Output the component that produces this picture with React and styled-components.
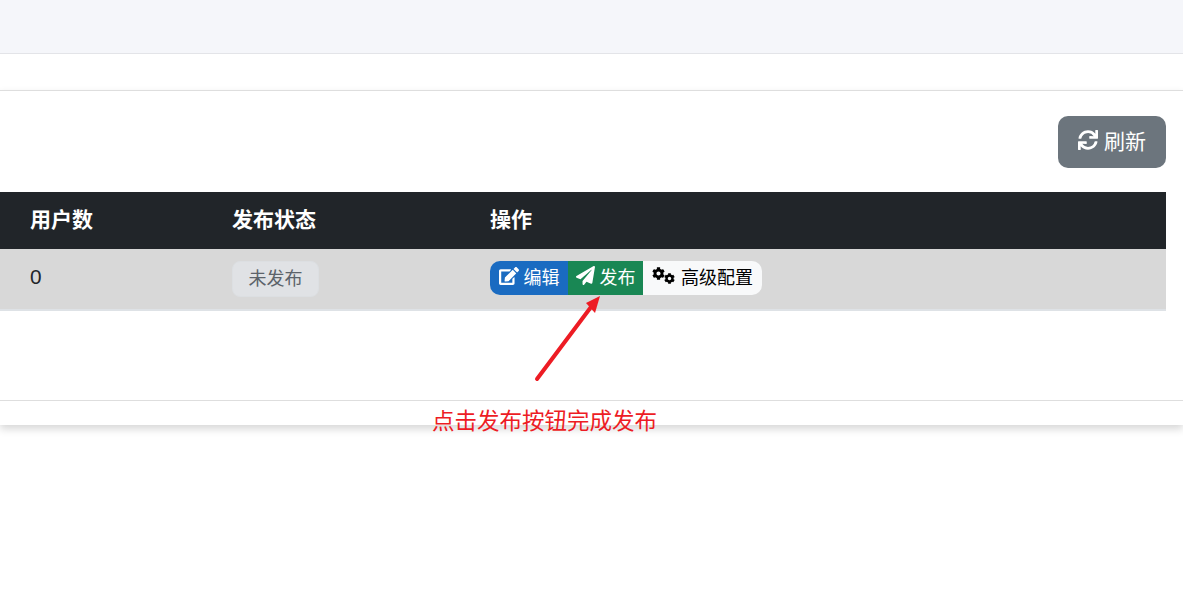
import React from 'react';
import styled, { createGlobalStyle } from 'styled-components';
import { FaSync, FaEdit, FaPaperPlane, FaCog } from 'react-icons/fa';

const GlobalStyle = createGlobalStyle`
  html, body {
    margin: 0;
    padding: 0;
    background: #fff;
    font-family: "Liberation Sans", "Noto Sans CJK SC", sans-serif;
    color: #212529;
  }
`;

const Page = styled.div`
  position: relative;
  height: 600px;
  overflow: hidden;
`;

const TopBand = styled.div`
  height: 53px;
  background: #f5f6fa;
  border-bottom: 1px solid #e3e4e8;
`;

const Card = styled.section`
  margin-top: 36px;
  background: #fff;
  border-top: 1px solid #dedede;
  box-shadow: 0 4px 8px rgba(0, 0, 0, 0.16);
`;

const Toolbar = styled.div`
  display: flex;
  justify-content: flex-end;
  padding: 25px 17px 24px 0;
`;

const RefreshButton = styled.button`
  display: flex;
  align-items: center;
  justify-content: center;
  gap: 6px;
  box-sizing: border-box;
  width: 108px;
  height: 52px;
  padding: 0 0 4px;
  border: 0;
  border-radius: 10px;
  background: #6c757d;
  color: #fff;
  font: inherit;
  font-size: 21px;
`;

const TableWrap = styled.div`
  padding-right: 17px;
  height: 208px;
`;

const Table = styled.table`
  width: 100%;
  table-layout: fixed;
  border-collapse: collapse;
`;

const HeadCell = styled.th`
  width: ${(p) => p.$width || 'auto'};
  height: 57px;
  padding: 0 0 5px ${(p) => p.$inset || 0};
  background: #212529;
  color: #fff;
  font-size: 21px;
  font-weight: 700;
  text-align: left;
  box-sizing: border-box;
`;

const BodyRow = styled.tr`
  background: #d8d8d8;
  border-bottom: 2px solid #dee2e6;
`;

const BodyCell = styled.td`
  height: 61px;
  padding: 0 0 1px ${(p) => p.$inset || 0};
  font-size: 20.8px;
  box-sizing: border-box;
`;

const CountText = styled.span`
  position: relative;
  top: -2px;
`;

const Badge = styled.span`
  display: inline-flex;
  align-items: center;
  justify-content: center;
  box-sizing: border-box;
  width: 87px;
  height: 36px;
  padding-bottom: 4px;
  border: 1px solid #dcdfe2;
  border-radius: 8px;
  background: #e0e2e5;
  color: #5c636a;
  font-size: 18px;
  vertical-align: middle;
`;

const ButtonGroup = styled.div`
  display: inline-flex;
  height: 34px;
  border-radius: 10px;
  overflow: hidden;
  vertical-align: middle;
  position: relative;
  top: -1px;
`;

const GroupButton = styled.button`
  display: flex;
  align-items: center;
  justify-content: center;
  gap: ${(p) => p.$gap || '5px'};
  width: ${(p) => p.$width};
  padding: 0 0 4px;
  border: 0;
  background: ${(p) => p.$bg};
  color: ${(p) => p.$fg || '#fff'};
  font: inherit;
  font-size: 18px;
`;

const GearPair = styled.span`
  display: inline-flex;
  align-items: flex-start;
  height: 18px;
  width: 23px;

  svg:last-child {
    margin: 6px 0 0 -1px;
  }
`;

const Footer = styled.div`
  height: 24px;
  border-top: 1px solid #dedede;
`;

const Arrow = styled.svg`
  position: absolute;
  left: 530px;
  top: 292px;
`;

const Note = styled.div`
  position: absolute;
  left: 432px;
  top: 406px;
  color: #ed1c24;
  font-size: 22.5px;
  line-height: 32px;
  white-space: nowrap;
`;

export default function App() {
  return (
    <Page>
      <GlobalStyle />
      <TopBand />
      <Card>
        <Toolbar>
          <RefreshButton><FaSync size={20} />刷新</RefreshButton>
        </Toolbar>
        <TableWrap>
          <Table>
            <thead>
              <tr>
                <HeadCell $width="232px" $inset="30px">用户数</HeadCell>
                <HeadCell $width="258px">发布状态</HeadCell>
                <HeadCell>操作</HeadCell>
              </tr>
            </thead>
            <tbody>
              <BodyRow>
                <BodyCell $inset="30px"><CountText>0</CountText></BodyCell>
                <BodyCell><Badge>未发布</Badge></BodyCell>
                <BodyCell>
                  <ButtonGroup>
                    <GroupButton $width="78px" $bg="#1a6bc1"><FaEdit size={20} />编辑</GroupButton>
                    <GroupButton $width="75px" $bg="#198754"><FaPaperPlane size={19} />发布</GroupButton>
                    <GroupButton $width="119px" $bg="#f8f9fa" $fg="#000" $gap="6px">
                      <GearPair><FaCog size={13} /><FaCog size={11} /></GearPair>
                      高级配置
                    </GroupButton>
                  </ButtonGroup>
                </BodyCell>
              </BodyRow>
            </tbody>
          </Table>
        </TableWrap>
        <Footer />
      </Card>
      <Arrow width="76" height="92" viewBox="0 0 76 92">
        <line x1="7" y1="87" x2="61" y2="15" stroke="#ed1c24" strokeWidth="4" strokeLinecap="round" />
        <polygon points="70,4 56,11 65,21" fill="#ed1c24" />
      </Arrow>
      <Note>点击发布按钮完成发布</Note>
    </Page>
  );
}
